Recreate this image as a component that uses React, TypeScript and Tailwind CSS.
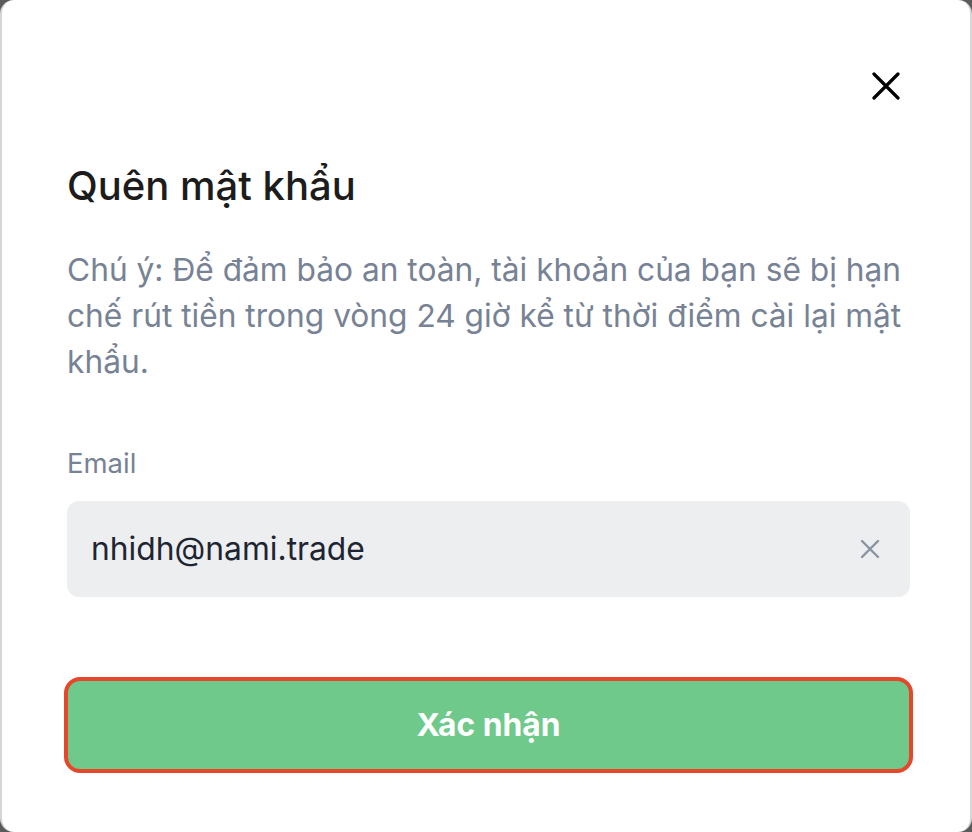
import { useState } from "react";

export default function App() {
  const [email, setEmail] = useState("nhidh@nami.trade");

  return (
    <div className="h-[832px] w-[972px] bg-[#5b5b5b] font-['Inter',sans-serif]">
      <div className="flex h-full w-full flex-col rounded-[14px] border-x-2 border-[#d6d6d8] bg-white pl-[65px] pr-[60px]">
        {/* Close */}
        <div className="flex justify-end pt-[72px] pr-[10px]">
          <button className="text-black">
            <svg width="28" height="28" viewBox="0 0 28 28" fill="none">
              <path d="M2 2L26 26M26 2L2 26" stroke="currentColor" strokeWidth="3.2" strokeLinecap="round" />
            </svg>
          </button>
        </div>

        {/* Title */}
        <h1 className="mt-[64px] text-[40px] leading-[44px] font-medium text-[#1c1c1c]">Quên mật khẩu</h1>

        {/* Notice */}
        <p className="mt-[39px] text-[31.7px] leading-[46px] text-[#778295]">
          Chú ý: Để đảm bảo an toàn, tài khoản của bạn sẽ bị hạn chế rút tiền trong vòng 24 giờ kể từ thời điểm cài lại mật khẩu.
        </p>

        {/* Email field */}
        <label className="mt-[62px] text-[27.5px] leading-[32px] text-[#778295]">Email</label>
        <div className="mt-[22px] flex h-[96px] items-center rounded-[12px] bg-[#edeef0] pl-[24px] pr-[30px]">
          <input
            value={email}
            onChange={(e) => setEmail(e.target.value)}
            className="min-w-0 flex-1 bg-transparent text-[31.8px] text-[#1e2532] outline-none"
          />
          <button onClick={() => setEmail("")} className="text-[#8a93a1]">
            <svg width="20" height="20" viewBox="0 0 20 20" fill="none">
              <path d="M2 2L18 18M18 2L2 18" stroke="currentColor" strokeWidth="2.4" strokeLinecap="round" />
            </svg>
          </button>
        </div>

        {/* Submit */}
        <button className="-mx-[3px] mt-[80px] h-[96px] rounded-[16px] border-[4px] border-[#e6472b] bg-[#6ec98b] text-[31.8px] font-bold text-white">
          Xác nhận
        </button>
      </div>
    </div>
  );
}
